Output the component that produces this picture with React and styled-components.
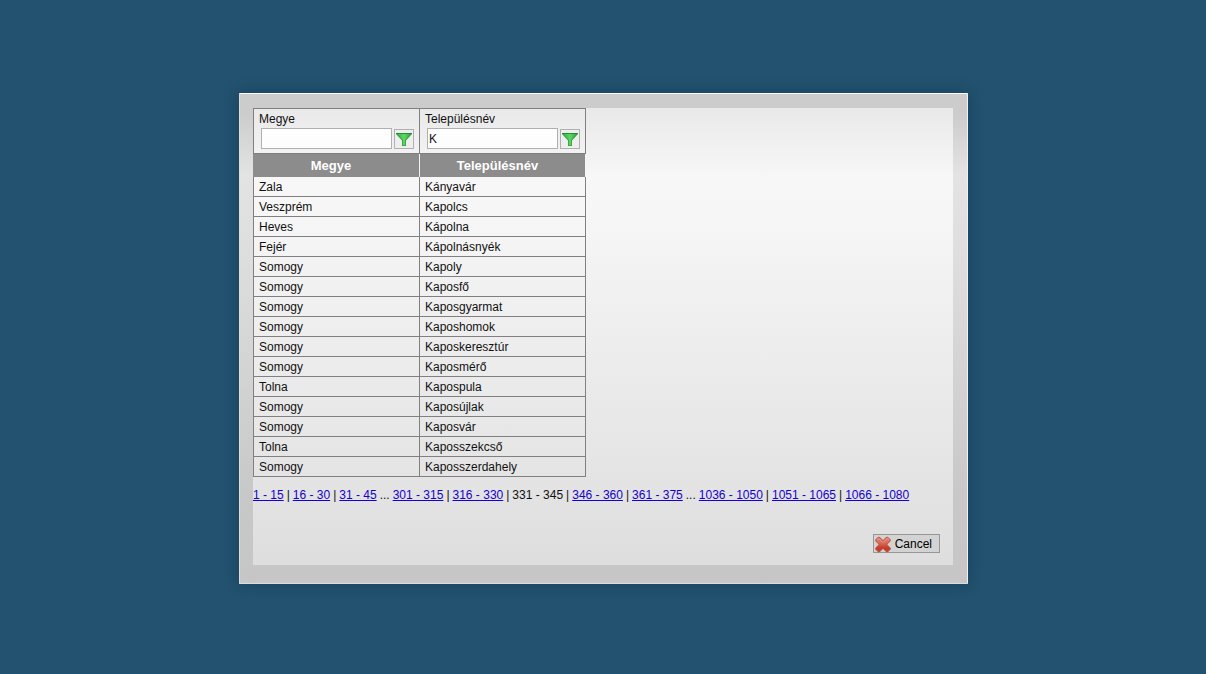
import { useState } from "react"
import styled, { createGlobalStyle } from "styled-components"

const GlobalStyle = createGlobalStyle`
* {
    box-sizing: border-box;
}

body {
    margin: 0;
    background: #22526f;
    color: #111;
    font-family: "Liberation Sans", Arial, sans-serif;
    font-size: 12px;
    line-height: 15px;
}

input, button {
    font: inherit;
    color: inherit;
}
`

const Page = styled.main`
display: flex;
align-items: center;
justify-content: center;
min-height: 100vh;
padding: 3px 0 0 1px;
`

const Dialog = styled.section`
width: 100%;
max-width: 729px;
padding: 14px 14px 18px 13px;
border: 1px solid #dcdcdc;
border-top-color: #fff;
border-right-color: #f0f0f0;
border-radius: 1px;
background: linear-gradient(#cccccc 0, #cccccc 20px, #e3e3e3 80px, #dedede 160px, #c8c8c8 400px, #c6c6c6 100%);
box-shadow: 0 0 14px rgba(10, 40, 60, 0.4);
`

const Content = styled.div`
display: flex;
flex-direction: column;
align-items: flex-start;
padding-bottom: 12px;
background: linear-gradient(#e9e9e9 0, #f7f7f7 70px, #f6f6f6 110px, #dedede 100%);
`

const Table = styled.table`
border-collapse: separate;
border-spacing: 0;
table-layout: fixed;
width: 333px;
`

const Cell = styled.td`
height: 20px;
padding: 3px 5px 1px;
border: 0 solid #808080;
border-width: 0 1px 1px 0;
line-height: 15px;

&:first-child {
    width: 167px;
    border-left-width: 1px;
}
`

const FilterCell = styled(Cell)`
padding: 3px 5px 4px;
border-top-width: 1px;
`

const HeadCell = styled.th`
height: 23px;
padding: 0 10px 0 0;
border-right: 1px solid #f4f4f4;
background: #8c8c8c;
color: #fff;
font-size: 13px;
line-height: 23px;
`

const FilterLabel = styled.label`
display: block;
margin-bottom: 1px;
`

const FilterRow = styled.div`
display: flex;
align-items: flex-end;
gap: 2px;
padding-left: 2px;
`

const FilterInput = styled.input`
flex: 1;
min-width: 0;
height: 21px;
padding: 0 1px;
border: 1px solid #b0b0b0;
background: #fdfdfd;
outline: none;
`

const IconButton = styled.button`
display: flex;
align-items: center;
justify-content: center;
width: 20px;
height: 20px;
padding: 0;
border: 1px solid #b0b0b0;
background: #eee;
`

const Pager = styled.nav`
display: flex;
flex-wrap: wrap;
gap: 3px;
margin-top: 11px;
`

const PageLink = styled.a`
color: #1400d2;
text-decoration: underline;
`

const CancelButton = styled.button`
display: flex;
align-items: center;
align-self: flex-end;
gap: 3px;
height: 19px;
margin: 31px 13px 0 0;
padding: 1px 7px 0 0;
border: 1px solid #979797;
background: #d3d3d3;
color: #000;
`

const columns = [
    { id: "megye", label: "Megye", value: "" },
    { id: "telepules", label: "Településnév", value: "K" },
]

const rows = [
    ["Zala", "Kányavár"],
    ["Veszprém", "Kapolcs"],
    ["Heves", "Kápolna"],
    ["Fejér", "Kápolnásnyék"],
    ["Somogy", "Kapoly"],
    ["Somogy", "Kaposfő"],
    ["Somogy", "Kaposgyarmat"],
    ["Somogy", "Kaposhomok"],
    ["Somogy", "Kaposkeresztúr"],
    ["Somogy", "Kaposmérő"],
    ["Tolna", "Kapospula"],
    ["Somogy", "Kaposújlak"],
    ["Somogy", "Kaposvár"],
    ["Tolna", "Kaposszekcső"],
    ["Somogy", "Kaposszerdahely"],
]

const pages = [
    "1 - 15", "|", "16 - 30", "|", "31 - 45", "...",
    "301 - 315", "|", "316 - 330", "|", "331 - 345", "|", "346 - 360", "|", "361 - 375", "...",
    "1036 - 1050", "|", "1051 - 1065", "|", "1066 - 1080",
]
const currentPage = "331 - 345"

function FunnelIcon() {
    return (
        <svg width="16" height="16" viewBox="0 0 16 16" aria-hidden="true">
            <defs>
                <linearGradient id="funnel" x1="0" x2="1" y1="0" y2="0">
                    <stop offset="0" stopColor="#35b54a" />
                    <stop offset="0.5" stopColor="#5ad863" />
                    <stop offset="1" stopColor="#2ea83c" />
                </linearGradient>
            </defs>
            <path d="M0 2h16v1l-6 6.500V15H6V9.500L0 3z" fill="#3a9c40" />
            <path d="M1.300 3h13.400L9.200 9v5.200H6.800V9z" fill="url(#funnel)" />
            <path d="M0 2.500h16" stroke="#2a8a33" />
        </svg>
    )
}

function CrossIcon() {
    return (
        <svg width="18" height="17" viewBox="0 0 18 17" aria-hidden="true">
            <defs>
                <linearGradient id="cross" x1="0" x2="0" y1="0" y2="1">
                    <stop offset="0" stopColor="#e08a7c" />
                    <stop offset="0.4" stopColor="#d96a58" />
                    <stop offset="0.75" stopColor="#c43a26" />
                    <stop offset="1" stopColor="#cc4431" />
                </linearGradient>
            </defs>
            <path
                d="M4.500 1Q5.500.8 9 4.600 12.500.8 13.500 1L16.500 4Q16.700 5 12.800 8.500 16.700 12 16.500 13L13.500 16Q12.500 16.200 9 12.400 5.500 16.200 4.500 16L1.500 13Q1.300 12 5.200 8.500 1.300 5 1.500 4z"
                fill="url(#cross)"
                stroke="#b9503f"
                strokeLinejoin="round"
            />
            <path d="M3 4 4.700 2.400 9 6.600 13.300 2.400 15 4" fill="none" stroke="#f0b3a8" strokeOpacity="0.4" />
        </svg>
    )
}

function Filter({ column }) {
    const [value, setValue] = useState(column.value)

    return (
        <FilterCell>
            <FilterLabel htmlFor={column.id}>{column.label}</FilterLabel>
            <FilterRow>
                <FilterInput id={column.id} value={value} onChange={(e) => setValue(e.target.value)} />
                <IconButton type="button" aria-label={column.label}>
                    <FunnelIcon />
                </IconButton>
            </FilterRow>
        </FilterCell>
    )
}

function PagerItem({ text }) {
    if (text === "|" || text === "..." || text === currentPage) {
        return <span>{text}</span>
    }
    return <PageLink href="#">{text}</PageLink>
}

export default function App() {
    return (
        <Page>
            <GlobalStyle />
            <Dialog>
                <Content>
                    <Table>
                        <thead>
                            <tr>
                                {columns.map((column) => <Filter key={column.id} column={column} />)}
                            </tr>
                            <tr>
                                {columns.map((column) => <HeadCell key={column.id} scope="col">{column.label}</HeadCell>)}
                            </tr>
                        </thead>
                        <tbody>
                            {rows.map(([county, town]) => (
                                <tr key={town}>
                                    <Cell>{county}</Cell>
                                    <Cell>{town}</Cell>
                                </tr>
                            ))}
                        </tbody>
                    </Table>
                    <Pager>
                        {pages.map((text, i) => <PagerItem key={i} text={text} />)}
                    </Pager>
                    <CancelButton type="button">
                        <CrossIcon />
                        Cancel
                    </CancelButton>
                </Content>
            </Dialog>
        </Page>
    )
}
